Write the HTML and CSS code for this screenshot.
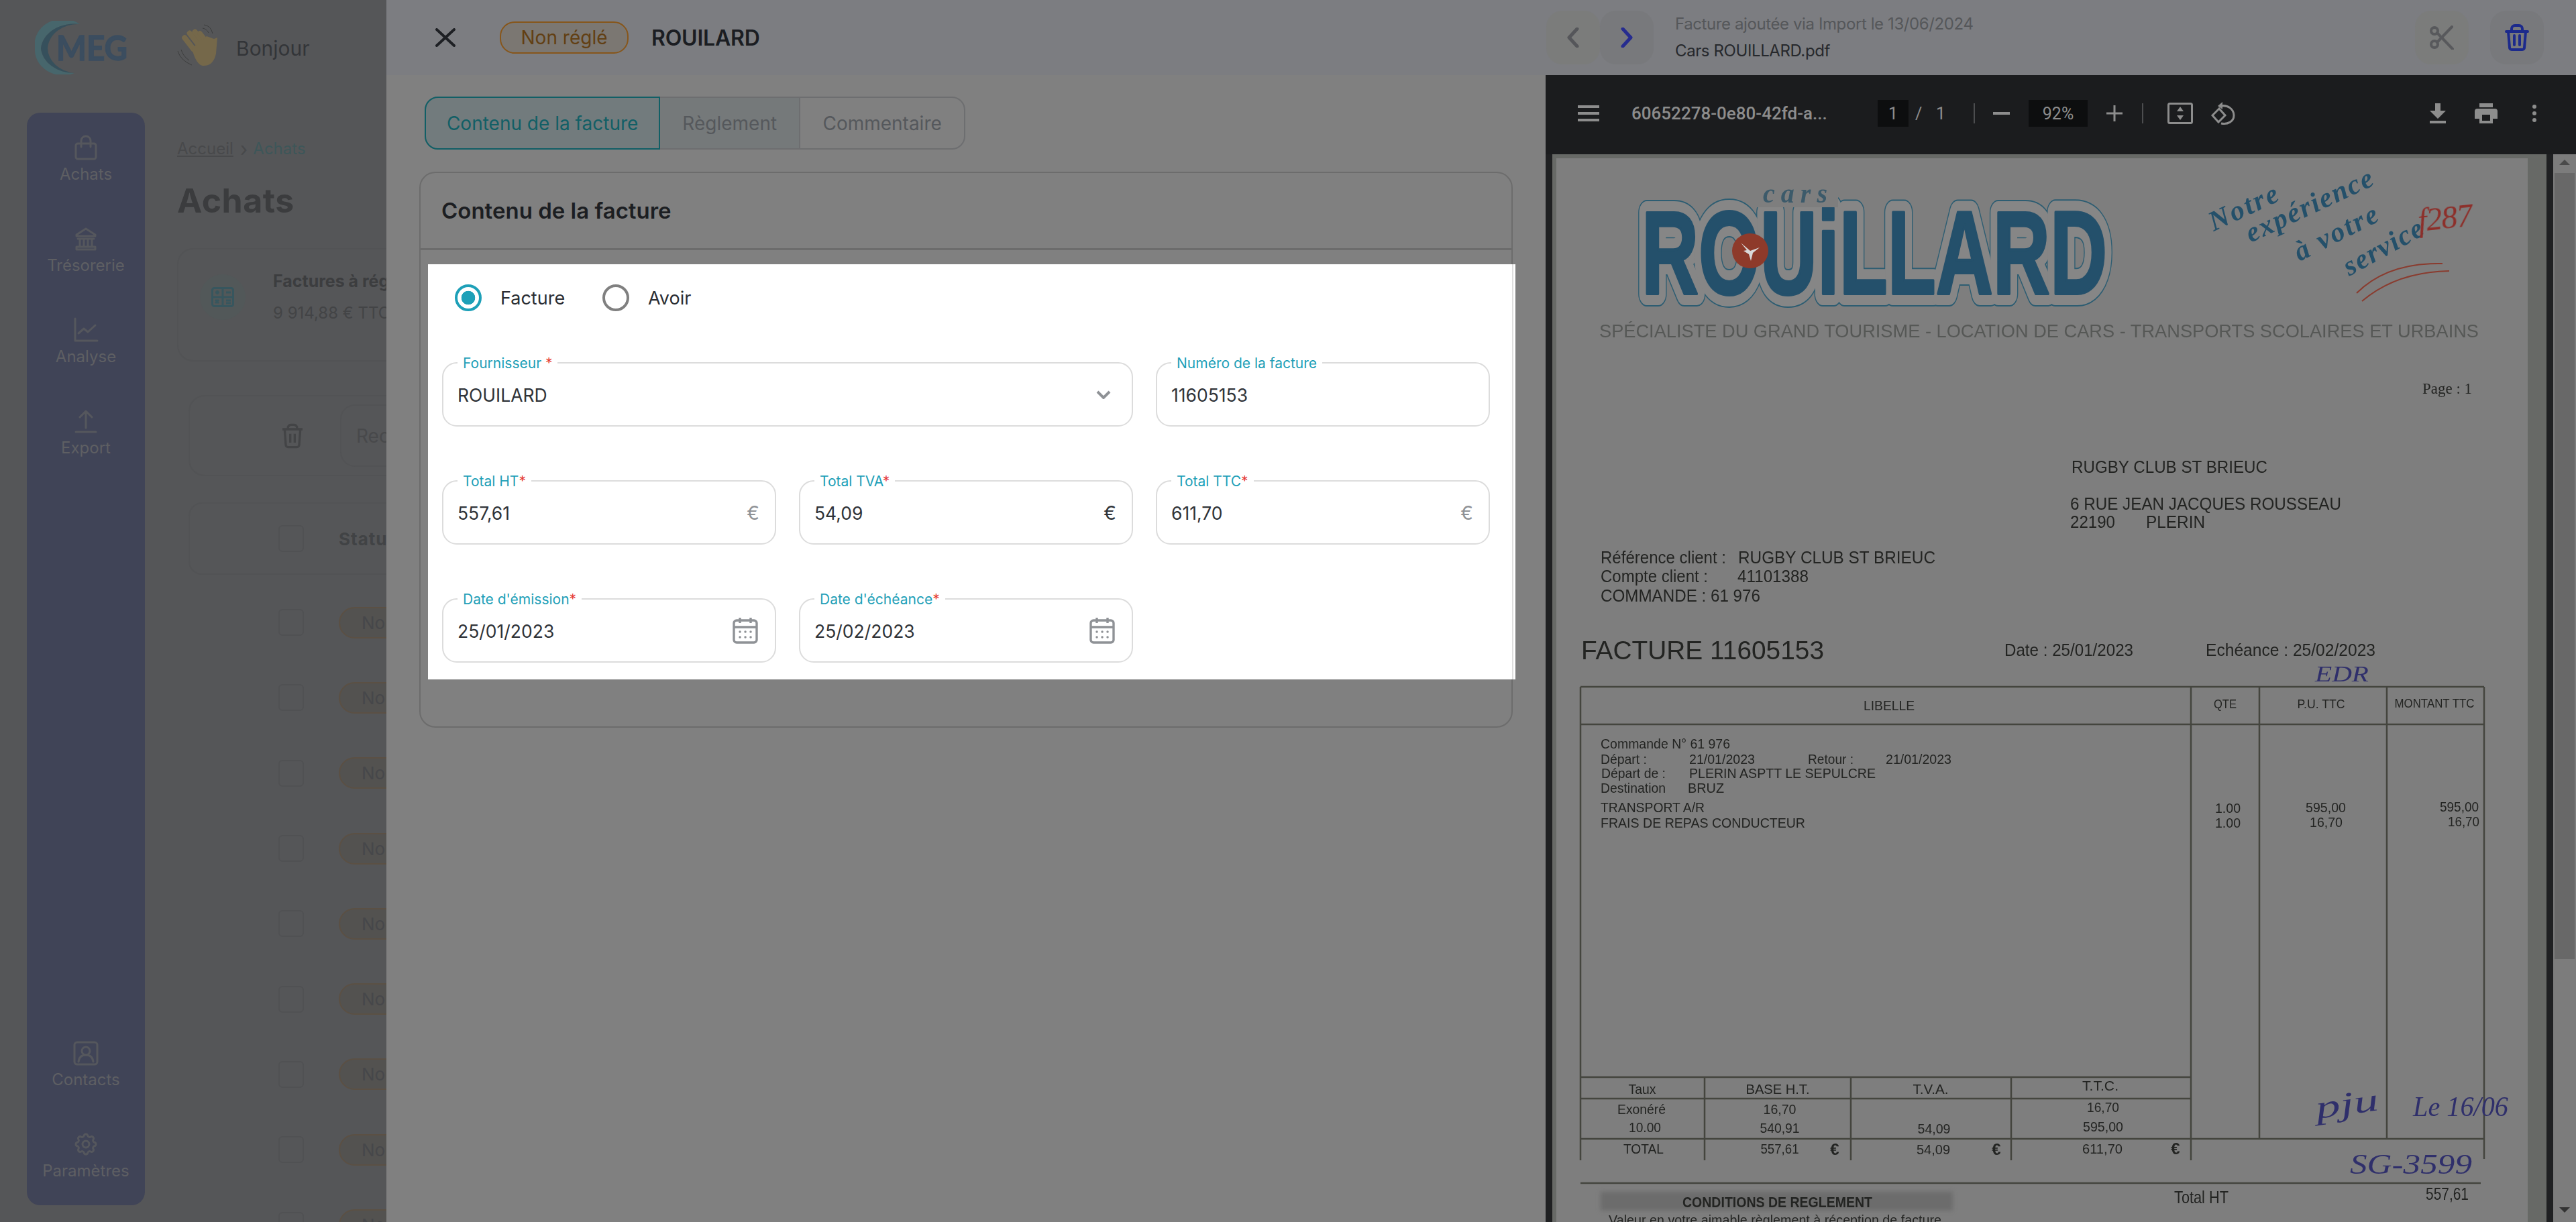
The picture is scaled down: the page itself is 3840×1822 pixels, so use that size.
FILE: index.html
```html
<!DOCTYPE html>
<html lang="fr">
<head>
<meta charset="utf-8">
<title>Achats</title>
<link rel="stylesheet" href="styles.css">
</head>
<body>
<div class="app">
  <header class="topbar">
    <svg class="meg" viewBox="0 0 150 80" width="150" height="80">
      <path class="meg-a" d="M67 5A42 38 0 0 0 0 41A42 38 0 0 0 59 78A50 40 0 0 1 9 41A50 40 0 0 1 67 5Z"/>
      <path class="meg-b" d="M67 5A50 40 0 0 0 9 41A50 40 0 0 0 59 78A45 38 0 0 1 19 41A45 38 0 0 1 67 5Z"/>
      <text class="meg-t" x="32" y="59" textLength="106" lengthAdjust="spacingAndGlyphs">MEG</text>
    </svg>
    <svg class="wave" viewBox="0 0 64 64" width="64" height="64">
      <g class="wave-skin">
        <rect x="14" y="14" width="8" height="30" rx="4" transform="rotate(-38 18 29)"/>
        <rect x="22" y="7" width="8" height="32" rx="4" transform="rotate(-38 26 23)"/>
        <rect x="30" y="5" width="8" height="32" rx="4" transform="rotate(-38 34 21)"/>
        <rect x="37" y="8" width="7" height="28" rx="3.5" transform="rotate(-38 40 22)"/>
        <path d="M22 36 L44 18 L55 22 L60 20 L58 44 Q54 63 38 62 Q28 60 22 36Z"/>
      </g>
      <path class="wave-line" d="M1 40 Q5 54 22 61 M6 38 Q9 48 18 54 M40 1 Q50 2 53 14 M38 6 Q44 7 47 13"/>
    </svg>
    <span class="hello">Bonjour</span>
  </header>
  <div class="below">
    <nav class="sidebar">
      <div class="side-group">
        <a class="side-item">
          <svg viewBox="0 0 40 40" width="40" height="40"><rect x="5" y="14" width="30" height="23" rx="3"/><path d="M13 19V10a7 7 0 0 1 14 0v9"/></svg>
          <span>Achats</span>
        </a>
        <a class="side-item">
          <svg viewBox="0 0 40 40" width="40" height="40"><path d="M6 14 20 5l14 9v2H6zM8 20h24M11 20v12M17 20v12M23 20v12M29 20v12M6 36v-4h28v4z"/></svg>
          <span>Trésorerie</span>
        </a>
        <a class="side-item">
          <svg viewBox="0 0 40 40" width="40" height="40"><path d="M4 3v33h33M9 25l8-7 6 5 11-10"/></svg>
          <span>Analyse</span>
        </a>
        <a class="side-item">
          <svg viewBox="0 0 40 40" width="40" height="40"><path d="M5 36h30M20 30V5M11 14l9-9 9 9"/></svg>
          <span>Export</span>
        </a>
      </div>
      <div class="side-group">
        <a class="side-item">
          <svg viewBox="0 0 40 40" width="40" height="40"><rect x="3" y="4" width="34" height="33" rx="4"/><circle cx="20" cy="17" r="6"/><path d="M9 33c1-8 6-10 11-10s10 2 11 10"/></svg>
          <span>Contacts</span>
        </a>
        <a class="side-item">
          <svg viewBox="0 0 24 24" width="40" height="40"><path class="thin" d="M10.325 4.317c.426-1.756 2.924-1.756 3.35 0a1.724 1.724 0 0 0 2.573 1.066c1.543-.94 3.31.826 2.37 2.37a1.724 1.724 0 0 0 1.065 2.572c1.756.426 1.756 2.924 0 3.35a1.724 1.724 0 0 0-1.066 2.573c.94 1.543-.826 3.31-2.37 2.37a1.724 1.724 0 0 0-2.572 1.065c-.426 1.756-2.924 1.756-3.35 0a1.724 1.724 0 0 0-2.573-1.066c-1.543.94-3.31-.826-2.37-2.37a1.724 1.724 0 0 0-1.065-2.572c-1.756-.426-1.756-2.924 0-3.35a1.724 1.724 0 0 0 1.066-2.573c-.94-1.543.826-3.31 2.37-2.37 1 .608 2.296.07 2.572-1.065z"/><circle class="thin" cx="12" cy="12" r="3"/></svg>
          <span>Paramètres</span>
        </a>
      </div>
    </nav>
    <main class="main">
      <div class="crumbs"><u>Accueil </u><b class="crumb-sep">›</b><span class="crumb-on">Achats</span></div>
      <h1 class="page-title">Achats</h1>
      <section class="stat-card">
        <div class="stat-icon">
          <svg viewBox="0 0 34 30" width="34" height="30"><rect x="1.5" y="1.5" width="31" height="27" rx="3"/><path d="M17 2v26M2 15h30M6 8h6M9 5v6M22 8h7M6 19l5 5M11 19l-5 5M22 20h7M22 24h7"/></svg>
        </div>
        <div class="stat-text"><strong>Factures à régler</strong><span>9 914,88 € TTC</span></div>
      </section>
      <section class="tool-card">
        <span class="tool-trash">
          <svg viewBox="0 0 24 24" width="40" height="40"><path d="M3 6h18M8 6V4a3 3 0 0 1 3-2h2a3 3 0 0 1 3 2v2M5 6l1 14a2 2 0 0 0 2 2h8a2 2 0 0 0 2-2l1-14M10 10v8M14 10v8"/></svg>
        </span>
        <span class="tool-search">Rechercher</span>
      </section>
      <section class="table-head"><i class="check"></i><strong>Statut</strong></section>
      <div class="rows">
        <div class="row"><i class="check"></i><span class="status">Non réglé</span></div>
        <div class="row"><i class="check"></i><span class="status">Non réglé</span></div>
        <div class="row"><i class="check"></i><span class="status">Non réglé</span></div>
        <div class="row"><i class="check"></i><span class="status">Non réglé</span></div>
        <div class="row"><i class="check"></i><span class="status">Non réglé</span></div>
        <div class="row"><i class="check"></i><span class="status">Non réglé</span></div>
        <div class="row"><i class="check"></i><span class="status">Non réglé</span></div>
        <div class="row"><i class="check"></i><span class="status">Non réglé</span></div>
        <div class="row"><i class="check"></i><span class="status">Non réglé</span></div>
      </div>
    </main>
  </div>
</div>

<aside class="drawer">
  <div class="left-col">
    <header class="drawer-head">
      <svg class="close" viewBox="0 0 30 28" width="30" height="28"><path d="M2 2l26 24M28 2L2 26"/></svg>
      <span class="pill">Non réglé</span>
      <span class="supplier">ROUILARD</span>
    </header>
    <div class="tabs">
      <span class="tab tab-on">Contenu de la facture</span>
      <span class="tab tab-mid">Règlement</span>
      <span class="tab">Commentaire</span>
    </div>
    <section class="content-card">
      <h2 class="card-title">Contenu de la facture</h2>
      <div class="spotlight">
        <div class="radios">
          <span class="radio radio-on"></span><span class="radio-label">Facture</span>
          <span class="radio"></span><span class="radio-label">Avoir</span>
        </div>
        <div class="fields">
          <div class="field span2">
            <label>Fournisseur<em>&nbsp;*</em></label><span class="val">ROUILARD</span>
            <svg class="chev" viewBox="0 0 22 13" width="22" height="13"><path d="M2 2l9 9 9-9"/></svg>
          </div>
          <div class="field"><label>Numéro de la facture</label><span class="val">11605153</span></div>
          <div class="field"><label>Total HT<em>*</em></label><span class="val">557,61</span><span class="cur">€</span></div>
          <div class="field"><label>Total TVA<em>*</em></label><span class="val">54,09</span><span class="cur cur-dark">€</span></div>
          <div class="field"><label>Total TTC<em>*</em></label><span class="val">611,70</span><span class="cur">€</span></div>
          <div class="field"><label>Date d'émission<em>*</em></label><span class="val">25/01/2023</span>
            <svg class="cal" viewBox="0 0 38 40" width="38" height="40"><rect x="2" y="5" width="34" height="33" rx="4"/><path d="M2 15h34M11 1v8M27 1v8"/><path class="dots" d="M11 22h.1M19 22h.1M27 22h.1M11 30h.1M19 30h.1M27 30h.1"/></svg>
          </div>
          <div class="field"><label>Date d'échéance<em>*</em></label><span class="val">25/02/2023</span>
            <svg class="cal" viewBox="0 0 38 40" width="38" height="40"><rect x="2" y="5" width="34" height="33" rx="4"/><path d="M2 15h34M11 1v8M27 1v8"/><path class="dots" d="M11 22h.1M19 22h.1M27 22h.1M11 30h.1M19 30h.1M27 30h.1"/></svg>
          </div>
        </div>
      </div>
    </section>
  </div>

  <div class="right-col">
    <header class="doc-head">
      <span class="sq sq-prev"><svg viewBox="0 0 18 30" width="18" height="30"><path d="M15 2 3 15l12 13"/></svg></span>
      <span class="sq sq-next"><svg viewBox="0 0 18 30" width="18" height="30"><path d="M3 2l12 13L3 28"/></svg></span>
      <div class="doc-info">
        <span class="doc-added">Facture ajoutée via Import le 13/06/2024</span>
        <span class="doc-name">Cars ROUILLARD.pdf</span>
      </div>
      <span class="sq sq-cut"><svg viewBox="0 0 36 36" width="36" height="36"><circle cx="7" cy="8" r="5"/><circle cx="7" cy="28" r="5"/><path d="M11 11l23 24M11 25 33 2"/></svg></span>
      <span class="sq sq-del"><svg viewBox="0 0 36 40" width="36" height="40"><path d="M2 11h32M10 11V7a5 5 0 0 1 5-5h6a5 5 0 0 1 5 5v4M5 11l2 24a3 3 0 0 0 3 3h16a3 3 0 0 0 3-3l2-24M14 17v14M22 17v14"/></svg></span>
    </header>
    <div class="pdf-bar">
      <svg class="pi" viewBox="0 0 32 24" width="32" height="24"><path d="M0 2h32M0 12h32M0 22h32"/></svg>
      <span class="pdf-file">60652278-0e80-42fd-a...</span>
      <span class="pdf-box pdf-page-box">1</span>
      <span class="pdf-slash">/</span><span class="pdf-total">1</span>
      <i class="pdf-sep"></i>
      <svg class="pi pi-minus" viewBox="0 0 25 4" width="25" height="4"><path d="M0 2h25"/></svg>
      <span class="pdf-box pdf-zoom">92%</span>
      <svg class="pi pi-plus" viewBox="0 0 24 24" width="24" height="24"><path d="M0 12h24M12 0v24"/></svg>
      <i class="pdf-sep pdf-sep2"></i>
      <svg class="pi pi-fit" viewBox="0 0 38 32" width="38" height="32"><rect x="1.5" y="1.5" width="35" height="29" rx="2"/><path class="pf" d="M19 6l5 7H14zM19 26l-5-7h10z"/></svg>
      <svg class="pi pi-rot" viewBox="0 0 36 36" width="36" height="36"><path d="M12 11 2 21l9 10 10-10zM15 7c10-2 19 5 19 14s-9 14-19 12"/><path class="pf" d="M17 1v11l-7-5z"/></svg>
      <svg class="pf-ic pi-dl" viewBox="0 0 24 30" width="24" height="30"><path d="M8 0h8v11h8L12 23 0 11h8zM0 26h24v4H0z"/></svg>
      <svg class="pf-ic pi-pr" viewBox="0 0 34 30" width="34" height="30"><path d="M7 0h20v6H7zM4 8h26a4 4 0 0 1 4 4v11h-7v7H7v-7H0V12a4 4 0 0 1 4-4zM11 17v9h12v-9z"/></svg>
      <svg class="pf-ic pi-more" viewBox="0 0 6 30" width="6" height="30"><circle cx="3" cy="5" r="3"/><circle cx="3" cy="15" r="3"/><circle cx="3" cy="25" r="3"/></svg>
    </div>
    <div class="viewer">
      <svg class="scan" viewBox="2314 230 1482 1592" width="1482" height="1592">
        <rect class="paper" x="2314" y="230" width="1482" height="1592"/>
        <rect class="paper-edge" x="3768" y="230" width="28" height="1592"/>
        <rect class="paper-edge" x="2314" y="230" width="6" height="1592"/>
        <rect class="paper-edge" x="2314" y="230" width="1482" height="6"/>
        <g class="ink">
          <!-- letterhead -->
          <text class="lg lg-out" x="2447" y="438" textLength="694" lengthAdjust="spacingAndGlyphs">ROUiLLARD</text>
          <text class="lg lg-gap" x="2447" y="438" textLength="694" lengthAdjust="spacingAndGlyphs">ROUiLLARD</text>
          <text class="lg lg-fill" x="2447" y="438" textLength="694" lengthAdjust="spacingAndGlyphs">ROUiLLARD</text>
          <ellipse class="lg-red" cx="2609" cy="374" rx="27" ry="26"/>
          <path class="lg-bird" d="M2595 362l14 12 14-5-10 8-3 12-3-10-8-5 5-1z"/>
          <rect class="paper" x="2616" y="268" width="124" height="41"/>
          <text class="lg-cars" x="2628" y="302" textLength="102">cars</text>
          <text class="slo" x="3300" y="345" textLength="110" transform="rotate(-25 3300 345)">Notre</text>
          <text class="slo" x="3355" y="362" textLength="205" transform="rotate(-25 3355 362)">expérience</text>
          <text class="slo" x="3428" y="390" textLength="135" transform="rotate(-27 3428 390)">à votre</text>
          <text class="slo" x="3502" y="412" textLength="130" transform="rotate(-29 3502 412)">service</text>
          <text class="red" x="3606" y="345" textLength="82" transform="rotate(-6 3606 345)">f287</text>
          <path class="redline" d="M3513 437C3550 400 3600 392 3641 393M3521 449C3555 420 3600 405 3651 404"/>
          <text class="t s29 soft" x="2384" y="503" textLength="1311" lengthAdjust="spacingAndGlyphs">SPÉCIALISTE DU GRAND TOURISME - LOCATION DE CARS - TRANSPORTS SCOLAIRES ET URBAINS</text>

          <!-- addresses -->
          <text class="serif s24" x="3611" y="587" textLength="74" lengthAdjust="spacingAndGlyphs">Page : 1</text>
          <text class="t s25" x="3088" y="705" textLength="292" lengthAdjust="spacingAndGlyphs">RUGBY CLUB ST BRIEUC</text>
          <text class="t s25" x="3086" y="760" textLength="404" lengthAdjust="spacingAndGlyphs">6 RUE JEAN JACQUES ROUSSEAU</text>
          <text class="t s25" x="3086" y="787" textLength="67" lengthAdjust="spacingAndGlyphs">22190</text>
          <text class="t s25" x="3199" y="787" textLength="88" lengthAdjust="spacingAndGlyphs">PLERIN</text>
          <text class="t s25" x="2386" y="840" textLength="187" lengthAdjust="spacingAndGlyphs">Référence client :</text>
          <text class="t s25" x="2591" y="840" textLength="294" lengthAdjust="spacingAndGlyphs">RUGBY CLUB ST BRIEUC</text>
          <text class="t s25" x="2386" y="868" textLength="160" lengthAdjust="spacingAndGlyphs">Compte client :</text>
          <text class="t s25" x="2590" y="868" textLength="106" lengthAdjust="spacingAndGlyphs">41101388</text>
          <text class="t s25" x="2386" y="897" textLength="238" lengthAdjust="spacingAndGlyphs">COMMANDE : 61 976</text>
          <text class="t s38" x="2357" y="983" textLength="362" lengthAdjust="spacingAndGlyphs">FACTURE 11605153</text>
          <text class="t s25" x="2988" y="978" textLength="192" lengthAdjust="spacingAndGlyphs">Date : 25/01/2023</text>
          <text class="t s25" x="3288" y="978" textLength="253" lengthAdjust="spacingAndGlyphs">Echéance : 25/02/2023</text>
          <text class="hand s34" x="3451" y="1016" textLength="80" lengthAdjust="spacingAndGlyphs">EDR</text>

          <!-- table rules -->
          <path class="rule" d="M2356 1024H3703M2356 1080H3703M2356 1024V1730M3266 1024V1730M3368 1024V1698M3558 1024V1698M3703 1024V1728M2356 1606H3266M2356 1638H3266M2356 1698H3703M2541 1606V1730M2759 1606V1730M2998 1606V1730M2356 1764H3698"/>

          <text class="t s20 mid" x="2816" y="1059" textLength="76" lengthAdjust="spacingAndGlyphs">LIBELLE</text>
          <text class="t s18 mid" x="3317" y="1056" textLength="34" lengthAdjust="spacingAndGlyphs">QTE</text>
          <text class="t s18 mid" x="3460" y="1056" textLength="71" lengthAdjust="spacingAndGlyphs">P.U. TTC</text>
          <text class="t s18 mid" x="3629" y="1055" textLength="119" lengthAdjust="spacingAndGlyphs">MONTANT TTC</text>

          <text class="t s20" x="2386" y="1116" textLength="193" lengthAdjust="spacingAndGlyphs">Commande N° 61 976</text>
          <text class="t s20" x="2386" y="1139" textLength="69" lengthAdjust="spacingAndGlyphs">Départ :</text>
          <text class="t s20" x="2518" y="1139" textLength="98" lengthAdjust="spacingAndGlyphs">21/01/2023</text>
          <text class="t s20" x="2695" y="1139" textLength="68" lengthAdjust="spacingAndGlyphs">Retour :</text>
          <text class="t s20" x="2811" y="1139" textLength="98" lengthAdjust="spacingAndGlyphs">21/01/2023</text>
          <text class="t s20" x="2387" y="1160" textLength="96" lengthAdjust="spacingAndGlyphs">Départ de :</text>
          <text class="t s20" x="2518" y="1160" textLength="278" lengthAdjust="spacingAndGlyphs">PLERIN ASPTT LE SEPULCRE</text>
          <text class="t s20" x="2386" y="1182" textLength="97" lengthAdjust="spacingAndGlyphs">Destination</text>
          <text class="t s20" x="2516" y="1182" textLength="54" lengthAdjust="spacingAndGlyphs">BRUZ</text>
          <text class="t s20" x="2386" y="1211" textLength="155" lengthAdjust="spacingAndGlyphs">TRANSPORT A/R</text>
          <text class="t s20" x="2386" y="1234" textLength="305" lengthAdjust="spacingAndGlyphs">FRAIS DE REPAS CONDUCTEUR</text>
          <text class="t s20" x="3302" y="1212" textLength="38" lengthAdjust="spacingAndGlyphs">1.00</text>
          <text class="t s20" x="3302" y="1234" textLength="38" lengthAdjust="spacingAndGlyphs">1.00</text>
          <text class="t s20" x="3437" y="1211" textLength="60" lengthAdjust="spacingAndGlyphs">595,00</text>
          <text class="t s20" x="3443" y="1233" textLength="49" lengthAdjust="spacingAndGlyphs">16,70</text>
          <text class="t s20" x="3637" y="1210" textLength="58" lengthAdjust="spacingAndGlyphs">595,00</text>
          <text class="t s20" x="3649" y="1232" textLength="47" lengthAdjust="spacingAndGlyphs">16,70</text>

          <text class="t s20 mid" x="2448" y="1631" textLength="41" lengthAdjust="spacingAndGlyphs">Taux</text>
          <text class="t s20 mid" x="2650" y="1631" textLength="95" lengthAdjust="spacingAndGlyphs">BASE H.T.</text>
          <text class="t s20 mid" x="2878" y="1631" textLength="53" lengthAdjust="spacingAndGlyphs">T.V.A.</text>
          <text class="t s20 mid" x="3131" y="1626" textLength="54" lengthAdjust="spacingAndGlyphs">T.T.C.</text>
          <text class="t s20 mid" x="2447" y="1661" textLength="72" lengthAdjust="spacingAndGlyphs">Exonéré</text>
          <text class="t s20 mid" x="2653" y="1661" textLength="49" lengthAdjust="spacingAndGlyphs">16,70</text>
          <text class="t s20 mid" x="3135" y="1658" textLength="48" lengthAdjust="spacingAndGlyphs">16,70</text>
          <text class="t s20 mid" x="2452" y="1688" textLength="48" lengthAdjust="spacingAndGlyphs">10.00</text>
          <text class="t s20 mid" x="2653" y="1689" textLength="59" lengthAdjust="spacingAndGlyphs">540,91</text>
          <text class="t s20 mid" x="2883" y="1690" textLength="49" lengthAdjust="spacingAndGlyphs">54,09</text>
          <text class="t s20 mid" x="3135" y="1687" textLength="60" lengthAdjust="spacingAndGlyphs">595,00</text>
          <text class="t s20 mid" x="2450" y="1720" textLength="60" lengthAdjust="spacingAndGlyphs">TOTAL</text>
          <text class="t s20 mid" x="2653" y="1720" textLength="57" lengthAdjust="spacingAndGlyphs">557,61</text>
          <text class="t s24 mid bold" x="2735" y="1722">€</text>
          <text class="t s20 mid" x="2882" y="1721" textLength="50" lengthAdjust="spacingAndGlyphs">54,09</text>
          <text class="t s24 mid bold" x="2976" y="1722">€</text>
          <text class="t s20 mid" x="3134" y="1720" textLength="60" lengthAdjust="spacingAndGlyphs">611,70</text>
          <text class="t s24 mid bold" x="3243" y="1721">€</text>

          <text class="hand s48" x="3454" y="1668" textLength="94" lengthAdjust="spacingAndGlyphs" transform="rotate(-8 3454 1668)">pju</text>
          <text class="hand s42" x="3597" y="1664" textLength="142" lengthAdjust="spacingAndGlyphs">Le 16/06</text>
          <text class="hand s42" x="3503" y="1750" textLength="182" lengthAdjust="spacingAndGlyphs">SG-3599</text>

          <rect class="band" x="2386" y="1777" width="525" height="28"/>
          <text class="t s22 bold" x="2508" y="1800" textLength="283" lengthAdjust="spacingAndGlyphs">CONDITIONS DE REGLEMENT</text>
          <text class="t s25" x="3241" y="1794" textLength="81" lengthAdjust="spacingAndGlyphs">Total HT</text>
          <text class="t s25" x="3616" y="1789" textLength="64" lengthAdjust="spacingAndGlyphs">557,61</text>
          <text class="t s20" x="2398" y="1826" textLength="496" lengthAdjust="spacingAndGlyphs">Valeur en votre aimable règlement à réception de facture</text>
        </g>
      </svg>
      <div class="scrollbar">
        <i class="arr arr-up"></i>
        <i class="thumb"></i>
        <i class="arr arr-down"></i>
      </div>
    </div>
  </div>
</aside>
</body>
</html>
```
FILE: styles.css
```css
* { box-sizing: border-box; }
html, body { margin: 0; height: 1822px; overflow: hidden; }
body { position: relative; background: #555658; font-family: Inter, "Liberation Sans", sans-serif; width: 3840px; }
.app { height: 1822px; display: flex; flex-direction: column; overflow: hidden; }

/* dimmed page behind the drawer */
.topbar { height: 168px; flex: none; display: flex; align-items: center; padding: 0 0 26px 52px; }
.meg { flex: none; }
.meg-a { fill: #47666c; }
.meg-b { fill: #36505c; }
.meg-t { font: 700 52px Lato, sans-serif; fill: #3b4d5f; stroke: #3b4d5f; stroke-width: 1.5px; }
.wave { flex: none; margin: -6px 0 0 62px; }
.wave-skin { fill: #75684a; }
.wave-line { fill: none; stroke: #3d3e3e; stroke-width: 1; }
.hello { margin: 2px 0 0 24px; font-size: 30px; color: #333538; }

.below { display: flex; flex: none; }
.sidebar { margin-left: 40px; width: 176px; height: 1629px; border-radius: 20px; background: #404457; display: flex; flex-direction: column; justify-content: space-between; padding: 32px 0 36px; flex: none; }
.side-group { display: flex; flex-direction: column; gap: 61px; }
.side-item { display: flex; flex-direction: column; align-items: center; color: #5e5f63; font-size: 24px; line-height: 30px; gap: 5px; }
.side-item svg { fill: none; stroke: #55575d; stroke-width: 3; stroke-linejoin: round; stroke-linecap: round; }
.side-item svg .thin { stroke-width: 1.8; }

.main { margin-left: 48px; padding-top: 38px; width: 900px; flex: none; }
.crumbs { font-size: 24px; line-height: 32px; color: #48494b; display: flex; align-items: center; }
.crumb-sep { margin: 0 8px 0 10px; font-weight: 400; font-size: 30px; line-height: 28px; }
.crumb-on { color: #3d5659; }
.page-title { margin: 31px 0 0; font-size: 50px; line-height: 60px; font-weight: 700; color: #3b3c3e; letter-spacing: .5px; }
.stat-card { margin-top: 41px; height: 169px; width: 700px; border: 2px solid #525355; border-radius: 24px; padding: 37px 32px; display: flex; gap: 41px; }
.stat-icon { width: 68px; height: 68px; border-radius: 50%; background: #525859; display: flex; align-items: center; justify-content: center; flex: none; }
.stat-icon svg { fill: none; stroke: #37565e; stroke-width: 3; }
.stat-text { margin-top: -14px; display: flex; flex-direction: column; font-size: 24px; line-height: 48px; color: #434446; }
.stat-text strong { font-weight: 700; font-size: 25px; color: #3c3d3f; }
.tool-card { margin: 50px 0 0 17px; height: 121px; width: 700px; border: 2px solid #525355; border-radius: 24px; display: flex; align-items: center; padding-left: 113px; }
.tool-trash { width: 80px; height: 80px; display: flex; align-items: center; justify-content: center; flex: none; }
.tool-trash svg { fill: none; stroke: #434446; stroke-width: 2; }
.tool-search { margin-left: 31px; width: 300px; height: 93px; border: 2px solid #525355; border-radius: 22px; padding-left: 22px; display: flex; align-items: center; font-size: 28px; color: #48494b; }
.table-head { margin: 39px 0 0 17px; height: 108px; width: 700px; border: 2px solid #525355; border-radius: 20px; display: flex; align-items: center; padding-left: 132px; gap: 52px; }
.table-head strong { font-size: 26px; color: #414345; letter-spacing: 1px; }
.check { display: block; width: 38px; height: 40px; border: 2px solid #505153; border-radius: 6px; flex: none; }
.rows { margin: 15px 0 0 17px; }
.row { height: 112.3px; display: flex; align-items: center; padding-left: 134px; gap: 52px; }
.status { height: 47px; width: 200px; border: 2px solid #5b5044; border-radius: 24px; padding-left: 32px; display: flex; align-items: center; background: #535250; font-size: 26px; color: #46474a; white-space: nowrap; }

/* drawer */
.drawer { position: absolute; left: 576px; top: 0; right: 0; bottom: 0; display: flex; background: #808080; }
.left-col { width: 1728px; flex: none; }
.drawer-head { height: 112px; background: #7c7d81; display: flex; align-items: center; padding-left: 73px; }
.close { fill: none; stroke: #1e2024; stroke-width: 4; stroke-linecap: round; flex: none; margin-right: 66px; }
.pill { width: 192px; height: 48px; border: 2px solid #87561a; border-radius: 22px; background: #7b7772; color: #623f13; font-size: 28px; display: flex; align-items: center; justify-content: center; }
.supplier { margin-left: 34px; font-size: 32px; font-weight: 600; color: #1b1d22; letter-spacing: -.2px; }
.tabs { margin: 32px 0 0 57px; width: 806px; height: 79px; display: flex; border: 2px solid #6d6e70; border-radius: 20px; font-size: 28px; color: #55585c; }
.tab { display: flex; align-items: center; justify-content: center; padding: 0; width: 245px; }
.tab-on { width: 353px; margin: -2px 0 -2px -2px; border: 2px solid #115f66; border-radius: 20px 0 0 20px; background: #727b7d; color: #125f66; }
.tab-mid { width: 210px; background: #75797a; border-right: 2px solid #6d6e70; }
.content-card { margin: 33px 0 0 49px; width: 1630px; height: 829px; border: 2px solid #6c6c6c; border-radius: 24px; }
.card-title { margin: 0; height: 115px; border-bottom: 3px solid #6c6c6c; display: flex; align-items: center; padding-left: 31px; font-size: 33px; font-weight: 600; color: #1c1e22; }

.spotlight { position: relative; margin: 21px -6px 0 11px; width: 1621px; height: 619px; background: #fff; padding: 30px 38px 25px 21px; }
.spotlight::after { content: ""; position: absolute; right: 3px; top: 0; bottom: 0; width: 2px; background: #dedede; }
.radios { display: flex; align-items: center; height: 40px; padding-left: 19px; }
.radio { width: 40px; height: 40px; border-radius: 50%; border: 4px solid #808080; flex: none; }
.radio-on { border-color: #1ea0b8; background: radial-gradient(circle, #1ea0b8 0 10px, #fff 10.6px); }
.radio-label { margin-left: 28px; width: 152px; font-size: 27px; color: #2a2d33; }
.fields { margin-top: 76px; display: grid; grid-template-columns: repeat(3, 498px); grid-auto-rows: 96px; gap: 80px 34px; }
.span2 { grid-column: span 2; }
.field { position: relative; border: 2px solid #dcdcdc; border-radius: 22px; padding: 2px 18px 0 21px; display: flex; align-items: center; justify-content: space-between; }
.field label { position: absolute; left: 21px; top: -13px; background: #fff; padding: 0 8px; font-size: 21px; line-height: 26px; color: #1ea0b8; white-space: nowrap; }
.field em { font-style: normal; color: #e53935; }
.val { font-size: 26.5px; color: #2f3338; }
.cur { font-size: 28px; color: #8f9296; margin-right: 5px; }
.cur-dark { color: #2f3338; }
.chev { fill: none; stroke: #8f9296; stroke-width: 4; flex: none; margin-right: 13px; margin-top: -2px; }
.cal { fill: none; stroke: #8f9296; stroke-width: 3.4; flex: none; margin-right: 7px; margin-top: -2px; }
.cal .dots { stroke-width: 3.4; stroke-linecap: round; }

/* document column */
.right-col { flex: 1; min-width: 0; display: flex; flex-direction: column; }
.doc-head { height: 112px; background: #7c7d81; display: flex; align-items: center; padding: 0 48px 0 1px; }
.sq { width: 80px; height: 80px; border-radius: 24px; display: flex; align-items: center; justify-content: center; flex: none; }
.sq svg { fill: none; stroke-width: 4; stroke-linecap: round; stroke-linejoin: round; }
.sq-prev { background: #7b7c7b; }
.sq-prev svg { stroke: #55565a; stroke-width: 5; }
.sq-next { background: #78797c; }
.sq-next svg { stroke: #262c8f; stroke-width: 5; }
.sq-cut { background: #7b7c7b; margin-left: auto; }
.sq-cut svg { stroke: #58595c; }
.sq-del { background: #78797c; margin-left: 32px; }
.sq-del svg { stroke: #1c2a8c; }
.doc-info { margin-left: 32px; display: flex; flex-direction: column; gap: 12px; font-size: 24px; line-height: 28px; }
.doc-added { color: #55575a; letter-spacing: -.4px; }
.doc-name { color: #26282c; letter-spacing: -.4px; }

.pdf-bar { height: 118px; background: #1b1c1e; display: flex; align-items: center; padding: 0 0 4px 48px; color: #8d8d8d; }
.pi { fill: none; stroke: #8d8d8d; stroke-width: 4; flex: none; }
.pf { fill: #8d8d8d; stroke: none; }
.pf-ic { fill: #8d8d8d; flex: none; }
.pdf-file { margin-left: 48px; width: 367px; font: 500 26px Roboto, sans-serif; }
.pdf-box { background: #0d0e0f; height: 40px; display: flex; align-items: center; justify-content: center; font: 400 25px Roboto, sans-serif; flex: none; }
.pdf-page-box { width: 46px; }
.pdf-slash { margin-left: 10px; font: 400 25px Roboto, sans-serif; width: 31px; }
.pdf-total { font: 400 25px Roboto, sans-serif; width: 56px; }
.pdf-sep { width: 2px; height: 30px; background: #4c4d4f; flex: none; }
.pi-minus { margin-left: 27px; }
.pdf-zoom { margin-left: 28px; width: 88px; }
.pi-plus { margin-left: 28px; stroke-width: 3; }
.pdf-sep2 { margin-left: 29px; }
.pi-fit { margin-left: 36px; stroke-width: 3; }
.pi-rot { margin-left: 27px; stroke-width: 3; }
.pi-dl { margin-left: 290px; }
.pi-pr { margin-left: 43px; }
.pi-more { margin-left: 52px; }

.viewer { position: relative; flex: 1; background: #1f2022; padding-left: 10px; overflow: hidden; }
.scan { display: block; }
.paper { fill: #7e7e7e; }
.paper-edge { fill: #676966; }
.ink { filter: blur(.3px); }
.t { font-family: "Liberation Sans", sans-serif; fill: #232422; }
.serif { font-family: "Liberation Serif", serif; fill: #232422; }
.soft { fill: #565856; }
.mid { text-anchor: middle; }
.bold { font-weight: 700; }
.s18 { font-size: 18px; }
.s20 { font-size: 21px; }
.s22 { font-size: 22px; }
.s24 { font-size: 24px; }
.s25 { font-size: 25px; }
.s29 { font-size: 28px; }
.s34 { font-size: 34px; }
.s38 { font-size: 38px; }
.s42 { font-size: 42px; }
.s48 { font-size: 48px; }
.lg { font: 700 176px "Liberation Sans", sans-serif; stroke-linejoin: round; }
.lg-out { fill: #2d5d72; stroke: #2d5d72; stroke-width: 38px; }
.lg-gap { fill: #868686; stroke: #868686; stroke-width: 34px; }
.lg-fill { fill: #24506b; stroke: #24506b; stroke-width: 4px; }
.lg-red { fill: #8e3a2a; }
.lg-bird { fill: #d9d9d9; }
.lg-cars { font: italic 700 40px "Liberation Serif", serif; fill: #3c5a6a; letter-spacing: 6px; }
.slo { font: italic 700 42px "Liberation Serif", serif; fill: #24506a; }
.red { font: italic 400 48px "Liberation Serif", serif; fill: #8d2f2a; }
.redline { fill: none; stroke: #8a3b2e; stroke-width: 2; }
.hand { font-family: "Liberation Serif", serif; font-style: italic; fill: #2f2f6b; }
.rule { fill: none; stroke: #44453e; stroke-width: 2.5; }
.band { fill: #6c6c6c; filter: blur(3px); }

.scrollbar { position: absolute; right: 0; top: -6px; bottom: 0; width: 34px; background: #7c7c7c; }
.thumb { position: absolute; left: 2px; right: 2px; top: 34px; height: 1172px; background: #686868; }
.arr { position: absolute; left: 9px; width: 0; height: 0; border-left: 8px solid transparent; border-right: 8px solid transparent; }
.arr-up { top: 14px; border-bottom: 8px solid #4a4a4a; }
.arr-down { bottom: 14px; border-top: 8px solid #333; }
```
